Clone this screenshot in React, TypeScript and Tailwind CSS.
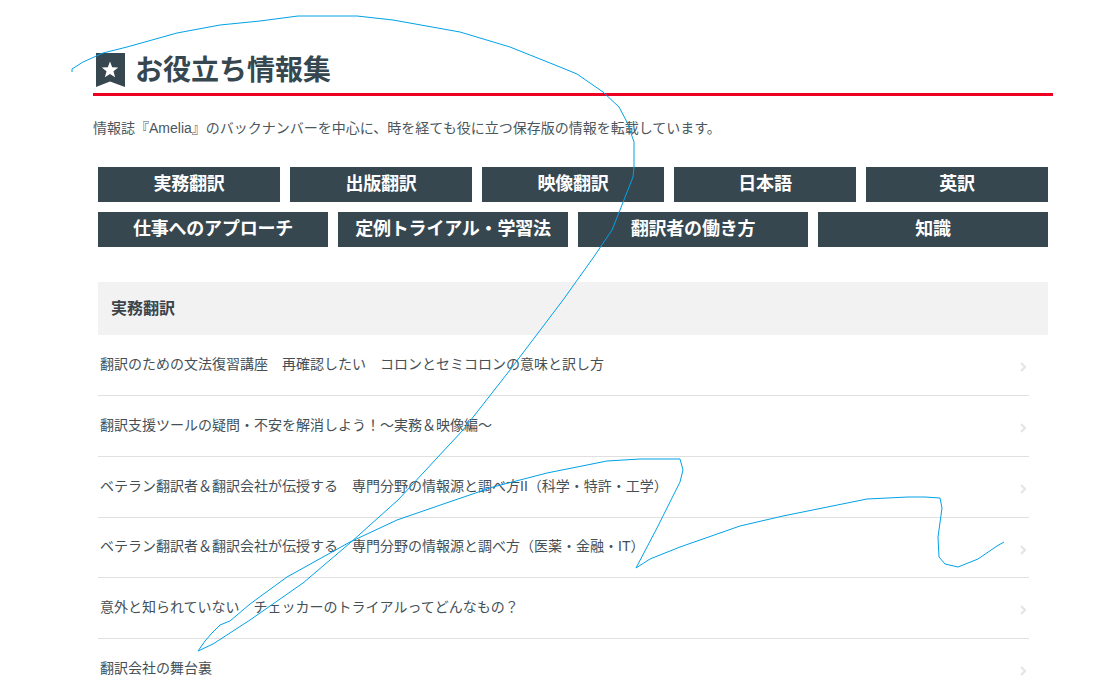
const rowOne = ["実務翻訳", "出版翻訳", "映像翻訳", "日本語", "英訳"];
const rowTwo = ["仕事へのアプローチ", "定例トライアル・学習法", "翻訳者の働き方", "知識"];
const articles = [
  "翻訳のための文法復習講座　再確認したい　コロンとセミコロンの意味と訳し方",
  "翻訳支援ツールの疑問・不安を解消しよう！～実務＆映像編～",
  "ベテラン翻訳者＆翻訳会社が伝授する　専門分野の情報源と調べ方II（科学・特許・工学）",
  "ベテラン翻訳者＆翻訳会社が伝授する　専門分野の情報源と調べ方（医薬・金融・IT）",
  "意外と知られていない　チェッカーのトライアルってどんなもの？",
  "翻訳会社の舞台裏",
];

const stroke =
  "M72 72 L72 69 L83 62 L103 53 L127 47 L177 33 L220 25 L260 21 L298 16 L357 16 L393 20 L460 32 L510 47 L560 67 L577 74 L603 92 L619 107 L627 122 L634 142 L634 167 L633 177 L620 210 L612 230 L593 258 L563 300 L510 370 L463 430 L398 500 L350 543 L303 583 L250 620 L213 644 L198 651 L205 641 L212 633 L220 625 L230 621 L250 604 L287 577 L350 542 L397 520 L455 500 L493 487 L547 473 L607 461 L640 459 L680 459 L683 470 L680 482 L657 528 L636 568 L650 559 L680 547 L740 526 L783 516 L867 499 L908 497 L925 497 L940 498 L942 508 L938 537 L939 557 L945 564 L958 567 L978 559 L997 546 L1004 542";

function Bookmark() {
  return (
    <svg width="30" height="35" viewBox="0 0 30 35" className="mr-[10px] shrink-0">
      <path d="M1 0H30V34L15 28.5L1 34Z" fill="#37474f" />
      <path
        d="M15 8.5L17.2 14.2L23.2 14.5L18.5 18.3L20.1 24.2L15 20.9L9.9 24.2L11.5 18.3L6.8 14.5L12.8 14.2Z"
        fill="#fff"
      />
    </svg>
  );
}

function Tile({ label }: { label: string }) {
  return (
    <a className="flex h-[35px] flex-1 items-center justify-center bg-[#37474f] text-[18px] font-bold tracking-[-0.2px] text-white">
      {label}
    </a>
  );
}

export default function App() {
  return (
    <div
      className="relative h-[681px] overflow-hidden bg-white text-[#37474f]"
      style={{ fontFamily: '"Liberation Sans", "Noto Sans CJK JP", sans-serif' }}
    >
      <main className="ml-[93px] w-[960px] pt-[53px]">
        <header className="border-b-[3px] border-[#ee0022] pb-[5px] pl-[2px]">
          <h1 className="flex h-[35px] items-center text-[28px] font-bold leading-none text-[#37474f]">
            <Bookmark />
            お役立ち情報集
          </h1>
        </header>
        <p className="mt-[22px] h-[20px] text-[14px] leading-[20px] text-[#4b575d]">
          情報誌『Amelia』のバックナンバーを中心に、時を経ても役に立つ保存版の情報を転載しています。
        </p>
        <nav className="mx-[5px] mt-[29px] flex flex-col gap-[10px]">
          <div className="flex gap-[10px]">
            {rowOne.map((l) => (
              <Tile key={l} label={l} />
            ))}
          </div>
          <div className="flex gap-[10px]">
            {rowTwo.map((l) => (
              <Tile key={l} label={l} />
            ))}
          </div>
        </nav>
        <section className="mx-[5px] mt-[35px]">
          <h2 className="flex h-[53px] items-center bg-[#f2f2f2] pl-[13px] text-[16px] font-bold text-[#3c4449]">
            実務翻訳
          </h2>
          <ul className="mr-[19px]">
            {articles.map((a) => (
              <li
                key={a}
                className="relative flex h-[60.85px] items-center border-b border-[#e0e0e0] pb-[1px] pl-[2px] text-[14px] text-[#455056]"
              >
                {a}
                <svg
                  width="6"
                  height="10"
                  viewBox="0 0 6 10"
                  className="absolute right-[3px] top-[27px]"
                >
                  <path d="M1 1L5 5L1 9" fill="none" stroke="#e4e4e4" strokeWidth="2" />
                </svg>
              </li>
            ))}
          </ul>
        </section>
      </main>
      <svg
        width="1117"
        height="681"
        viewBox="0 0 1117 681"
        className="pointer-events-none absolute left-0 top-0"
      >
        <path d={stroke} fill="none" stroke="#00a2e8" strokeWidth="1" strokeLinejoin="round" />
      </svg>
    </div>
  );
}
